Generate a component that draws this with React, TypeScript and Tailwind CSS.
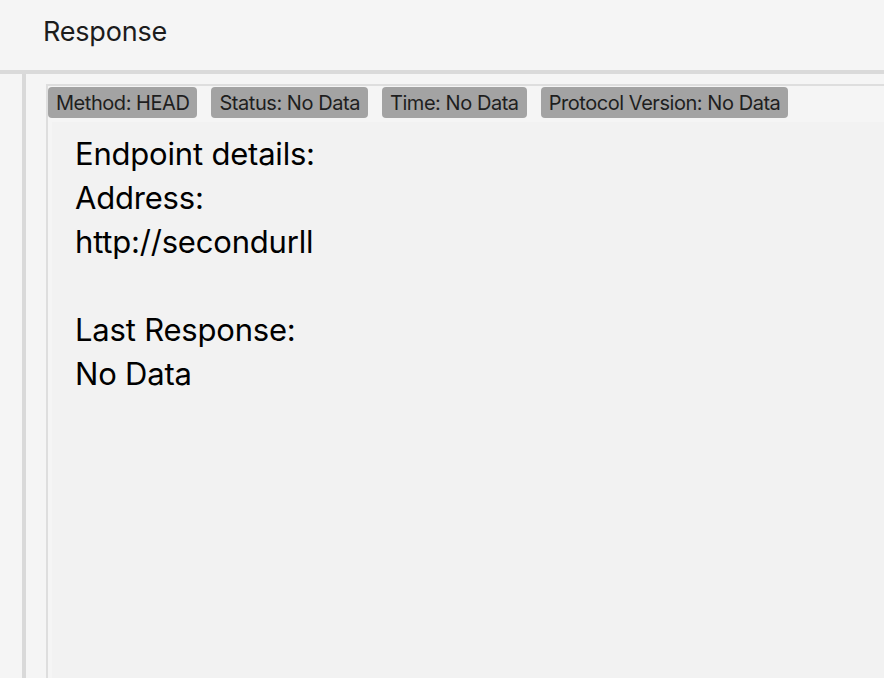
import React from 'react'

const badges = ['Method: HEAD', 'Status: No Data', 'Time: No Data', 'Protocol Version: No Data']

export default function App() {
  return (
    <div className="w-[884px] h-[678px] overflow-hidden bg-[#f5f5f5] flex flex-col font-['Inter',sans-serif]">
      <div className="h-[74px] shrink-0 flex items-center pl-[43px] border-b-4 border-[#dadada]">
        <h1 className="text-[27px] text-[#1c1c1c] -mt-[6px] tracking-[-0.2px]">Response</h1>
      </div>
      <div className="flex-1 flex">
        <div className="w-[22px] shrink-0" />
        <div className="flex-1 flex border-l-4 border-[#d9d9d9] pl-[20px] pt-[10px]">
          <div className="flex-1 flex flex-col border-l-2 border-t-2 border-[#dedede]">
            <div className="flex gap-[14px] pt-[1px] h-[36px] shrink-0">
              {badges.map((b) => (
                <span
                  key={b}
                  className="h-[31px] flex items-center px-[8px] rounded-[4px] bg-[#a3a3a3] text-[#1e1e1e] text-[20px] tracking-[-0.45px] whitespace-nowrap"
                >
                  {b}
                </span>
              ))}
            </div>
            <div className="flex-1 ml-[4px] bg-[#f2f2f2] pl-[23px] pt-[10px] text-[31px] tracking-[-0.2px] leading-[44px] text-black">
              <div>Endpoint details:</div>
              <div>Address:</div>
              <div>http://secondurll</div>
              <div className="h-[44px]" />
              <div>Last Response:</div>
              <div>No Data</div>
            </div>
          </div>
        </div>
      </div>
    </div>
  )
}
